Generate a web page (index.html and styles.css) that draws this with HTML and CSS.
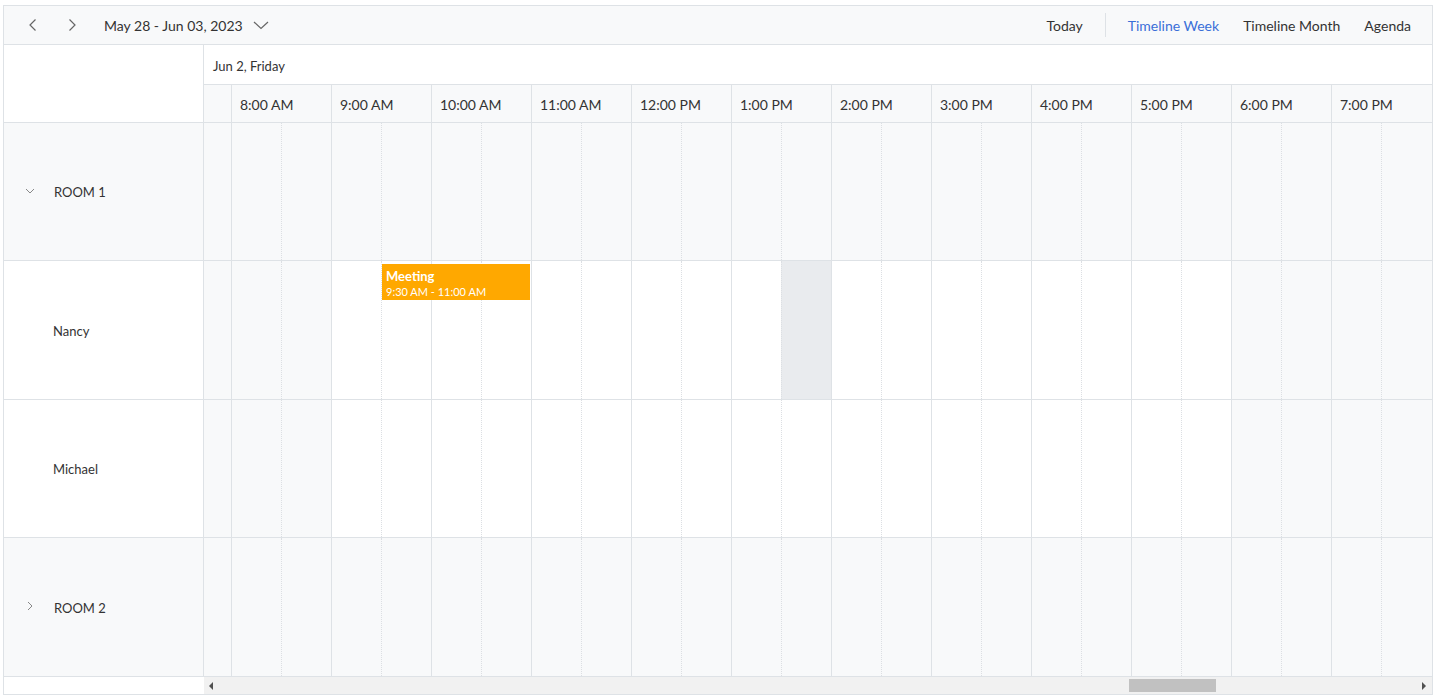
FILE: index.html
```html
<!DOCTYPE html>
<html lang="en">
<head>
  <meta charset="UTF-8" />
  <title>Timeline Week</title>
  <link rel="stylesheet" href="styles.css">
</head>
<body>

  <div class="sch">

    <div class="toolbar">
      <button class="icon-btn" title="Previous">
        <svg width="16" height="16" viewBox="0 0 16 16"><path d="M10.5 2.5 5 8l5.5 5.5" fill="none" stroke="#666" stroke-width="1.2"/></svg>
      </button>
      <button class="icon-btn" title="Next">
        <svg width="16" height="16" viewBox="0 0 16 16"><path d="M5.5 2.5 11 8l-5.5 5.5" fill="none" stroke="#666" stroke-width="1.2"/></svg>
      </button>
      <div class="range">May 28 - Jun 03, 2023</div>
      <button class="icon-btn drop" title="Pick date">
        <svg width="18" height="16" viewBox="0 0 18 16"><path d="M2 5l7 6.5L16 5" fill="none" stroke="#666" stroke-width="1.2"/></svg>
      </button>

      <div class="views">
        <span class="view">Today</span>
        <span class="sep"></span>
        <span class="view active">Timeline Week</span>
        <span class="view">Timeline Month</span>
        <span class="view">Agenda</span>
      </div>
    </div>

    <div class="head">
      <div class="corner"></div>
      <div class="head-right">
        <div class="date-row">Jun 2, Friday</div>
        <div class="time-row">
          <div class="tcell part"></div>
          <div class="tcell">8:00 AM</div>
          <div class="tcell">9:00 AM</div>
          <div class="tcell">10:00 AM</div>
          <div class="tcell">11:00 AM</div>
          <div class="tcell">12:00 PM</div>
          <div class="tcell">1:00 PM</div>
          <div class="tcell">2:00 PM</div>
          <div class="tcell">3:00 PM</div>
          <div class="tcell">4:00 PM</div>
          <div class="tcell">5:00 PM</div>
          <div class="tcell">6:00 PM</div>
          <div class="tcell">7:00 PM</div>
        </div>
      </div>
    </div>

    <div class="body">

      <!-- ROOM 1 -->
      <div class="row group">
        <div class="label">
          <svg class="tree" width="12" height="12" viewBox="0 0 12 12"><path d="M2 4l4 4 4-4" fill="none" stroke="#888" stroke-width="1"/></svg>
          ROOM 1
        </div>
        <div class="cells">
          <div class="part off"></div>
          <div class="hr off"><i></i><i></i></div>
          <div class="hr off"><i></i><i></i></div>
          <div class="hr off"><i></i><i></i></div>
          <div class="hr off"><i></i><i></i></div>
          <div class="hr off"><i></i><i></i></div>
          <div class="hr off"><i></i><i></i></div>
          <div class="hr off"><i></i><i></i></div>
          <div class="hr off"><i></i><i></i></div>
          <div class="hr off"><i></i><i></i></div>
          <div class="hr off"><i></i><i></i></div>
          <div class="hr off"><i></i><i></i></div>
          <div class="hr off"><i></i><i></i></div>
          <div class="tail off"></div>
        </div>
      </div>

      <!-- Nancy -->
      <div class="row">
        <div class="label child">Nancy</div>
        <div class="cells">
          <div class="part off"></div>
          <div class="hr off"><i></i><i></i></div>
          <div class="hr"><i></i><i></i></div>
          <div class="hr"><i></i><i></i></div>
          <div class="hr"><i></i><i></i></div>
          <div class="hr"><i></i><i></i></div>
          <div class="hr"><i></i><i class="sel"></i></div>
          <div class="hr"><i></i><i></i></div>
          <div class="hr"><i></i><i></i></div>
          <div class="hr"><i></i><i></i></div>
          <div class="hr"><i></i><i></i></div>
          <div class="hr off"><i></i><i></i></div>
          <div class="hr off"><i></i><i></i></div>
          <div class="tail off"></div>

          <div class="event">
            <div class="ev-title">Meeting</div>
            <div class="ev-time">9:30 AM - 11:00 AM</div>
          </div>
        </div>
      </div>

      <!-- Michael -->
      <div class="row">
        <div class="label child">Michael</div>
        <div class="cells">
          <div class="part off"></div>
          <div class="hr off"><i></i><i></i></div>
          <div class="hr"><i></i><i></i></div>
          <div class="hr"><i></i><i></i></div>
          <div class="hr"><i></i><i></i></div>
          <div class="hr"><i></i><i></i></div>
          <div class="hr"><i></i><i></i></div>
          <div class="hr"><i></i><i></i></div>
          <div class="hr"><i></i><i></i></div>
          <div class="hr"><i></i><i></i></div>
          <div class="hr"><i></i><i></i></div>
          <div class="hr off"><i></i><i></i></div>
          <div class="hr off"><i></i><i></i></div>
          <div class="tail off"></div>
        </div>
      </div>

      <!-- ROOM 2 -->
      <div class="row group">
        <div class="label">
          <svg class="tree" width="12" height="12" viewBox="0 0 12 12"><path d="M4 2l4 4-4 4" fill="none" stroke="#888" stroke-width="1"/></svg>
          ROOM 2
        </div>
        <div class="cells">
          <div class="part off"></div>
          <div class="hr off"><i></i><i></i></div>
          <div class="hr off"><i></i><i></i></div>
          <div class="hr off"><i></i><i></i></div>
          <div class="hr off"><i></i><i></i></div>
          <div class="hr off"><i></i><i></i></div>
          <div class="hr off"><i></i><i></i></div>
          <div class="hr off"><i></i><i></i></div>
          <div class="hr off"><i></i><i></i></div>
          <div class="hr off"><i></i><i></i></div>
          <div class="hr off"><i></i><i></i></div>
          <div class="hr off"><i></i><i></i></div>
          <div class="hr off"><i></i><i></i></div>
          <div class="tail off"></div>
        </div>
      </div>

    </div>

    <div class="scroll">
      <div class="scroll-left"></div>
      <div class="track">
        <span class="arrow left"></span>
        <span class="thumb"></span>
        <span class="arrow right"></span>
      </div>
    </div>

  </div>

</body>
</html>
```

FILE: styles.css
```css
body {
  margin: 0;
  background: white;
  color: #333;
  font-family: Lato, "Noto Sans", sans-serif;
}

.sch {
  margin: 5px 0 0 3px;
  width: 1430px;
  height: 690px;
  box-sizing: border-box;
  border: 1px solid #dee2e6;
  display: flex;
  flex-direction: column;
}

/* toolbar */
.toolbar {
  height: 38px;
  flex: none;
  background: #f8f9fa;
  border-bottom: 1px solid #dee2e6;
  display: flex;
  align-items: center;
  padding-left: 17px;
}

.icon-btn {
  background: none;
  border: none;
  padding: 0;
  width: 24px;
  height: 24px;
  display: flex;
  align-items: center;
  justify-content: center;
  margin-right: 15px;
}

.range {
  font-size: 14px;
  margin-left: 5px;
  color: #333;
}

.icon-btn.drop {
  margin-left: 6px;
}

.views {
  margin-left: auto;
  display: flex;
  align-items: center;
  font-size: 14px;
  padding-right: 21px;
}

.view {
  margin-left: 24px;
  color: #333;
}

.view:first-child {
  margin-left: 0;
}

.sep + .view {
  margin-left: 22px;
}

.view.active {
  color: #3a6fd8;
}

.sep {
  width: 1px;
  height: 24px;
  background: #dee2e6;
  margin-left: 22px;
}

/* header */
.head {
  display: flex;
  flex: none;
  border-bottom: 1px solid #dee2e6;
}

.corner {
  width: 199px;
  border-right: 1px solid #dee2e6;
  flex: none;
}

.head-right {
  flex: 1;
}

.date-row {
  height: 39px;
  line-height: 42px;
  padding-left: 9px;
  font-size: 13px;
  border-bottom: 1px solid #dee2e6;
}

.time-row {
  display: flex;
  height: 37px;
  background: #f8f9fa;
}

.tcell {
  width: 91px;
  flex: none;
  border-left: 1px solid #dee2e6;
  padding-left: 8px;
  font-size: 14px;
  line-height: 39px;
}

.tcell.part {
  width: 27px;
  border-left: none;
  padding: 0;
}

/* rows */
.body {
  flex: 1;
  display: flex;
  flex-direction: column;
}

.row {
  height: 137px;
  flex: none;
  display: flex;
  border-bottom: 1px solid #dee2e6;
}

.row:nth-child(even) {
  height: 138px;
}

.label {
  width: 200px;
  flex: none;
  border-right: 1px solid #dee2e6;
  display: flex;
  align-items: center;
  font-size: 13px;
  padding: 1px 0 0 20px;
  box-sizing: border-box;
}

.row.group .label {
  background: #f8f9fa;
}

.label .tree {
  margin: -3px 18px 0 0;
}

.label.child {
  padding-left: 49px;
}

.cells {
  flex: 1;
  display: flex;
  position: relative;
}

.part {
  width: 27px;
  flex: none;
}

.tail {
  flex: 1;
}

.hr {
  width: 100px;
  flex: none;
  display: flex;
}

.hr i {
  width: 50px;
  box-sizing: border-box;
  border-left: 1px solid #dee2e6;
}

.hr i + i {
  border-left: 1px dotted #dcdfe3;
}

.off,
.hr.off i {
  background: #f8f9fa;
}

.hr i.sel {
  background: #e9ebee;
}

.event {
  position: absolute;
  left: 178px;
  top: 3px;
  width: 148px;
  height: 36px;
  background: #ffa800;
  color: white;
  padding: 5px 4px 0;
  box-sizing: border-box;
}

.ev-title {
  font-size: 13px;
  font-weight: bold;
  line-height: 15px;
}

.ev-time {
  font-size: 11px;
  line-height: 16px;
}

/* horizontal scrollbar */
.scroll {
  height: 17px;
  flex: none;
  display: flex;
}

.scroll-left {
  width: 200px;
  flex: none;
}

.track {
  flex: 1;
  background: #f1f1f1;
  position: relative;
}

.arrow {
  position: absolute;
  top: 5px;
  width: 0;
  height: 0;
  border-top: 4px solid transparent;
  border-bottom: 4px solid transparent;
}

.arrow.left {
  left: 5px;
  border-right: 4px solid #505050;
}

.arrow.right {
  right: 6px;
  border-left: 4px solid #505050;
}

.thumb {
  position: absolute;
  left: 925px;
  top: 2px;
  width: 87px;
  height: 13px;
  background: #c1c1c1;
}
```
